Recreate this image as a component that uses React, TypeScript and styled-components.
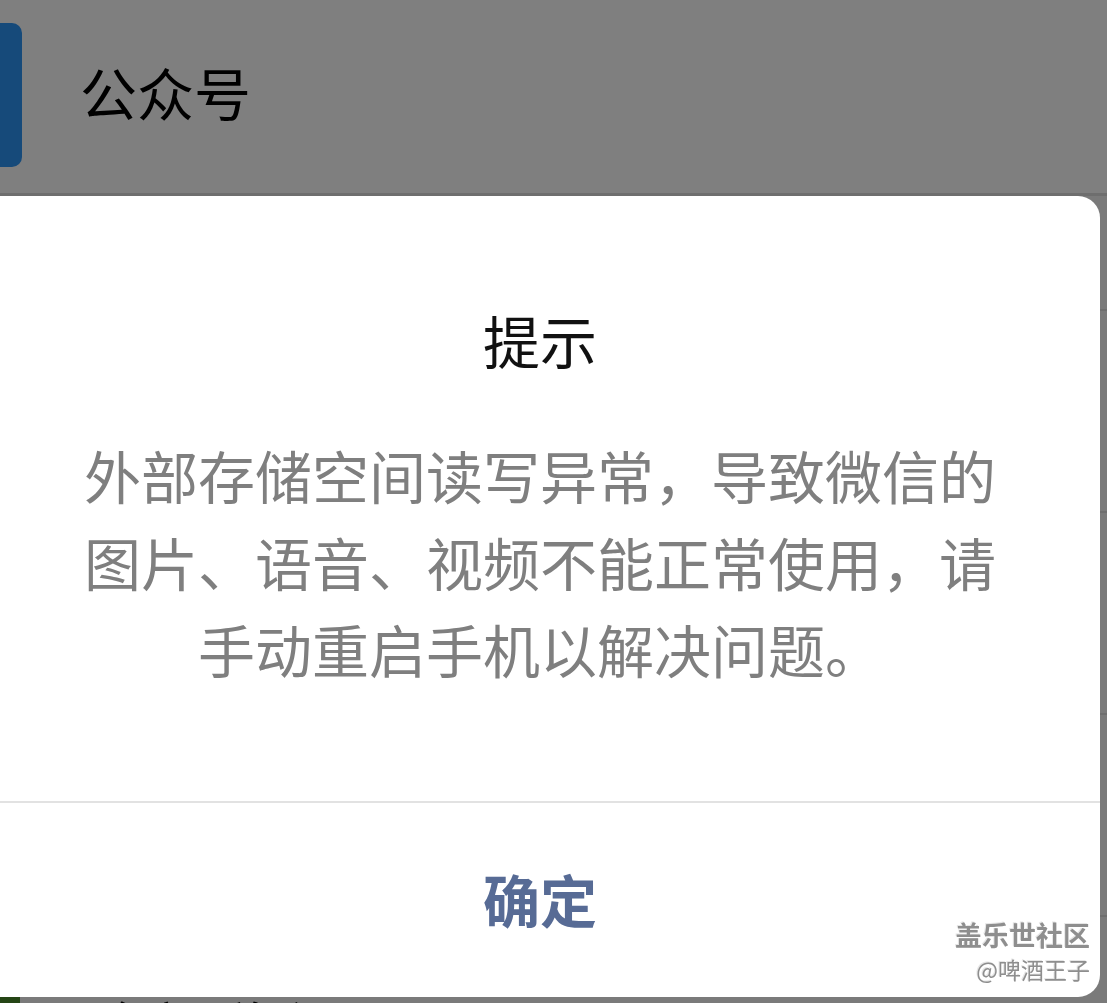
import React from "react";
import styled, { createGlobalStyle } from "styled-components";

const Global = createGlobalStyle`
  html, body { margin: 0; padding: 0; }
  body {
    width: 1107px;
    height: 1003px;
    overflow: hidden;
    background: #f4f4f4;
    font-family: "Noto Sans CJK SC", "Noto Sans", sans-serif;
  }
`;

const Page = styled.div`
  width: 1107px;
  height: 1003px;
  overflow: hidden;
  display: flex;
  flex-direction: column;
  background: #f4f4f4;
`;

const Header = styled.header`
  height: 193px;
  flex: none;
  display: flex;
  align-items: center;
  gap: 58px;
  background: #ffffff;
  border-bottom: 3px solid #dcdcdc;
`;

const Badge = styled.div`
  width: 44px;
  height: 144px;
  margin-left: -22px;
  margin-top: -4px;
  border-radius: 10px;
  background: #2c94f4;
`;

const HeaderTitle = styled.div`
  font-size: 57px;
  color: #000;
  line-height: 1;
  margin-top: -10px;
`;

const List = styled.div`
  display: flex;
  flex-direction: column;
`;

const Row = styled.div<{ $h: number }>`
  height: ${(p) => p.$h}px;
  flex: none;
  display: flex;
  align-items: center;
  gap: 74px;
  border-bottom: 2px solid #dddddd;
  box-sizing: border-box;
`;

const Avatar = styled.div`
  width: 40px;
  height: 120px;
  margin-left: -20px;
  border-radius: 8px;
  background: #4a8a2a;
`;

const RowText = styled.div`
  font-size: 56px;
  color: #000;
  line-height: 1;
  margin-top: 16px;
`;

const Overlay = styled.div`
  position: fixed;
  inset: 0;
  background: rgba(0, 0, 0, 0.5);
`;

const Dialog = styled.div`
  position: fixed;
  left: -20px;
  top: 196px;
  width: 1120px;
  height: 801px;
  background: #ffffff;
  border-radius: 22px;
  display: flex;
  flex-direction: column;
  overflow: hidden;
`;

const Body = styled.div`
  flex: 1;
  display: flex;
  flex-direction: column;
  align-items: center;
  padding-top: 104px;
  gap: 53px;
  border-bottom: 2px solid #e2e2e2;
`;

const Title = styled.div`
  font-size: 57px;
  line-height: 78px;
  color: #111111;
`;

const Message = styled.div`
  width: 16.4em;
  font-size: 57px;
  line-height: 87px;
  color: #7f7f7f;
  text-align: center;
`;

const Footer = styled.div`
  height: 194px;
  flex: none;
  display: flex;
  align-items: center;
  justify-content: center;
  position: relative;
`;

const Confirm = styled.button`
  border: none;
  background: transparent;
  padding: 0;
  margin-top: -4px;
  font-family: "Noto Sans CJK SC", sans-serif;
  font-size: 57px;
  font-weight: 700;
  color: #576b95;
  line-height: 1;
`;

const Watermark = styled.div`
  position: absolute;
  right: 10px;
  bottom: 16px;
  display: flex;
  flex-direction: column;
  align-items: flex-end;
  gap: 10px;
  color: #8e8e8e;
  text-shadow: 1px 1px 0 #ffffff, -1px -1px 0 #e6e6e6;
  line-height: 1;
`;

const MarkTop = styled.div`
  font-size: 27px;
  font-weight: 700;
`;

const MarkBottom = styled.div`
  font-size: 23px;
`;

export default function App() {
  return (
    <>
      <Global />
      <Page>
        <Header>
          <Badge />
          <HeaderTitle>公众号</HeaderTitle>
        </Header>
        <List>
          <Row $h={115} />
          <Row $h={202} />
          <Row $h={202} />
          <Row $h={202} />
          <Row $h={202}>
            <Avatar />
            <RowText>全部群聊</RowText>
          </Row>
        </List>
      </Page>
      <Overlay />
      <Dialog>
        <Body>
          <Title>提示</Title>
          <Message>
            外部存储空间读写异常，导致微信的图片、语音、视频不能正常使用，请手动重启手机以解决问题。
          </Message>
        </Body>
        <Footer>
          <Confirm>确定</Confirm>
          <Watermark>
            <MarkTop>盖乐世社区</MarkTop>
            <MarkBottom>@啤酒王子</MarkBottom>
          </Watermark>
        </Footer>
      </Dialog>
    </>
  );
}
